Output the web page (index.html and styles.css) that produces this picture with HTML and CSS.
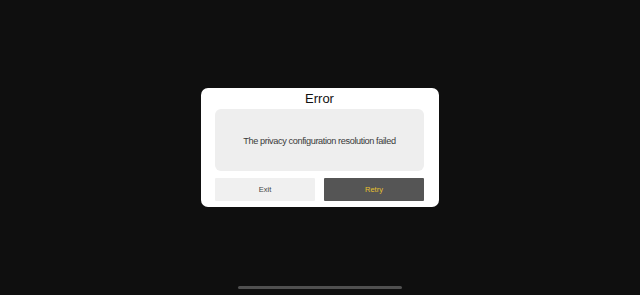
FILE: index.html
```html
<!DOCTYPE html>
<html>
<head>
<meta charset="utf-8">
<link rel="stylesheet" href="styles.css">
</head>
<body>
<div class="screen">
  <div class="dialog">
    <div class="title">Error</div>
    <div class="message">The privacy configuration resolution failed</div>
    <div class="actions">
      <div class="btn exit">Exit</div>
      <div class="btn retry">Retry</div>
    </div>
  </div>
  <div class="home-indicator"></div>
</div>
</body>
</html>
```
FILE: styles.css
```css
html, body {
  margin: 0;
  padding: 0;
  background: #0f0f0f;
  font-family: "Liberation Sans", Arial, sans-serif;
}
.screen {
  width: 640px;
  height: 295px;
  display: flex;
  flex-direction: column;
  align-items: center;
  position: relative;
}
.dialog {
  margin-top: 88px;
  width: 238px;
  height: 119px;
  box-sizing: border-box;
  background: #ffffff;
  border-radius: 7px;
  padding: 0 15px 0 14px;
  display: flex;
  flex-direction: column;
}
.title {
  height: 21px;
  line-height: 22px;
  text-align: center;
  font-size: 13px;
  color: #111;
}
.message {
  height: 62px;
  background: #eeeeee;
  border-radius: 6px;
  display: flex;
  align-items: center;
  justify-content: center;
  font-size: 9.2px;
  letter-spacing: -0.4px;
  color: #3a3a3a;
  padding-top: 1px;
  box-sizing: border-box;
}
.actions {
  margin-top: 7px;
  display: flex;
  gap: 9px;
}
.btn {
  flex: 1;
  height: 23px;
  display: flex;
  align-items: center;
  justify-content: center;
  font-size: 7.5px;
  border-radius: 1px;
}
.exit {
  background: #f0f0f0;
  color: #444;
}
.retry {
  background: #555555;
  color: #e6c02e;
}
.home-indicator {
  position: absolute;
  left: 238px;
  top: 286px;
  width: 164px;
  height: 3px;
  border-radius: 2px;
  background: #505050;
}
```
